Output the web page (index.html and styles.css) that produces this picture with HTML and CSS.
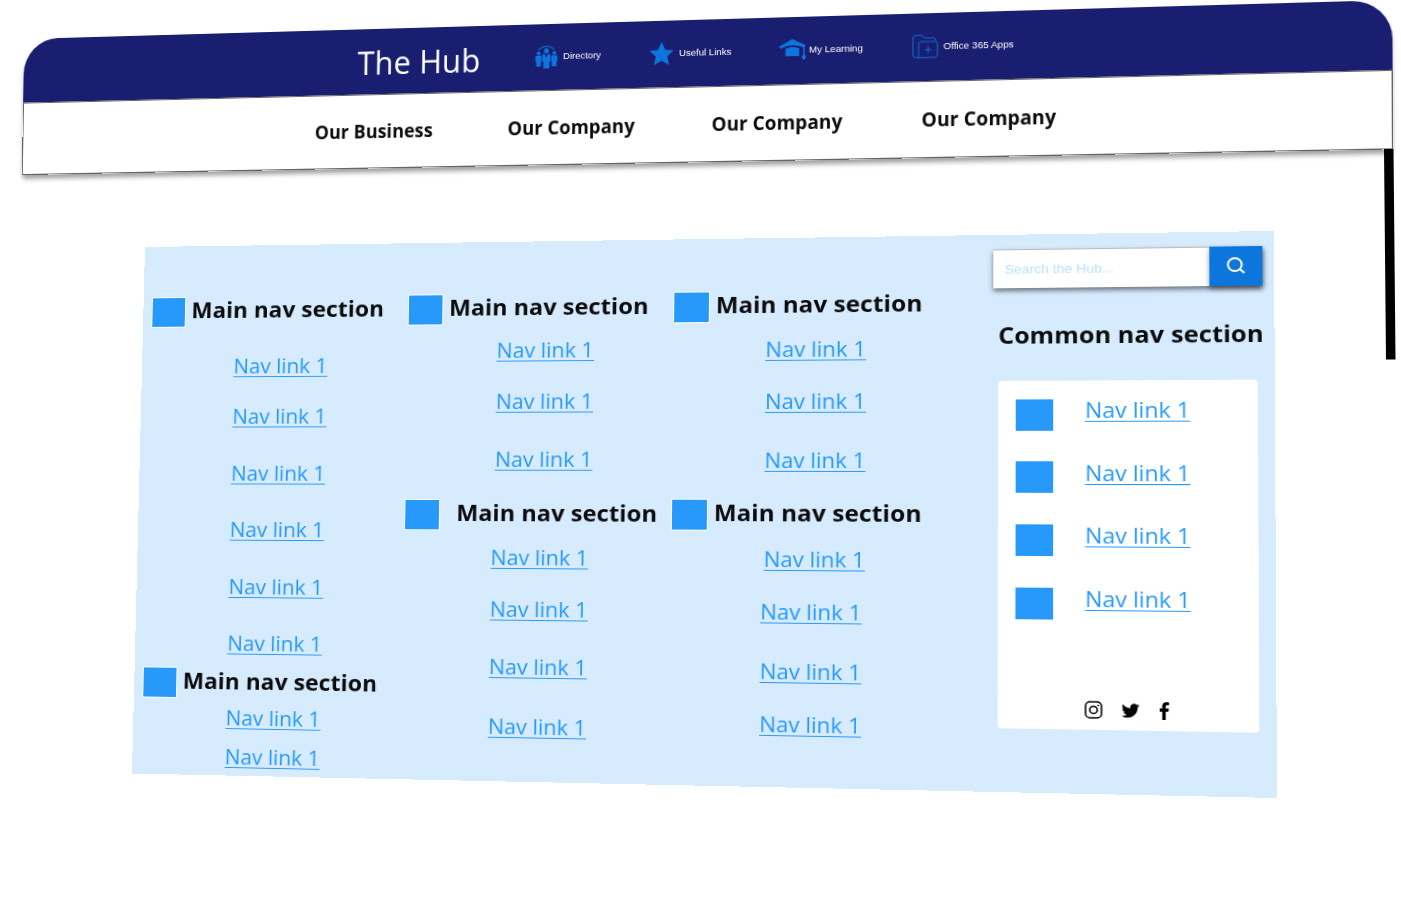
FILE: index.html
```html
<!DOCTYPE html>
<html lang="en">
<head>
<meta charset="utf-8">
<title>The Hub</title>
<link rel="stylesheet" href="styles.css">
</head>
<body>
<div class="scene">
  <header class="header">
    <div class="topbar">
      <h1 class="brand">The Hub</h1>
      <a class="tool tool-directory">
        <svg class="icon-directory" width="24" height="24" viewBox="0 0 24 24" fill="#0d76dc"><path d="M4 5.2C8 .2 16 .2 20 5.2" fill="none" stroke="#0d76dc" stroke-width="1.1"/><circle cx="4" cy="8.4" r="2"/><circle cx="20" cy="8.4" r="2"/><circle cx="12" cy="6.2" r="2.6"/><path d="M.8 11h6.4v6H6.4v5H1.6v-5H.8zM16.8 11h6.4v6h-.8v5h-4.8v-5h-.8zM8 9.6h2.4L12 13l1.600-3.400H16v7.600h-1V24H9v-6.800H8z"/></svg>
        <span>Directory</span>
      </a>
      <a class="tool tool-links">
        <svg class="icon-star" width="25" height="24" viewBox="0 0 24 24" fill="#0d76dc"><path d="M12 0l3.600 8.200 8.400.9-6.300 5.800 1.900 8.600L12 19.200l-7.600 4.300 1.900-8.600L0 9.100l8.400-.9z"/></svg>
        <span>Useful Links</span>
      </a>
      <a class="tool tool-learning">
        <svg class="icon-cap" width="27" height="22" viewBox="0 0 27 22" fill="#0d76dc"><path d="M0 7.500L13.500 0 27 6.500l-1.300 1.200v7.800l1.500 2.700-2.200 3.300-2.200-3.300 1.500-2.700V8.600C18 5.200 8.500 5.400 2.500 9.300z"/><path d="M6.800 9.500c4-2 9.500-2 13.600 0V17H6.800z"/></svg>
        <span>My Learning</span>
      </a>
      <a class="tool tool-apps">
        <svg class="icon-folder" width="25" height="24" viewBox="0 0 25 24" fill="none" stroke="#0d76dc" stroke-width=".9"><path d="M6 22.800H3.500Q.6 22.500.6 19.500V3Q.8.8 3 .7h6l3.200 2.800h8q2.600.3 2.700 3"/><path d="M6 22.800V9.200Q6 7 8.300 7h13.500q2.400.2 2.400 2.500v10.800q-.2 2.300-2.600 2.500z"/><path d="M15.200 11.700v6.600M11.900 15h6.600"/></svg>
        <span>Office 365 Apps</span>
      </a>
    </div>
    <nav class="mainnav">
      <a>Our Business</a><a>Our Company</a><a>Our Company</a><a>Our Company</a>
    </nav>
  </header>

  <div class="scrollbar"></div>

  <main class="panel">
    <section class="column column-first">
      <h2 class="heading"><i class="box"></i>Main nav section</h2>
      <a class="link">Nav link 1</a>
      <a class="link">Nav link 1</a>
      <a class="link">Nav link 1</a>
      <a class="link">Nav link 1</a>
      <a class="link">Nav link 1</a>
      <a class="link">Nav link 1</a>
      <h2 class="heading"><i class="box"></i>Main nav section</h2>
      <a class="link">Nav link 1</a>
      <a class="link">Nav link 1</a>
    </section>
    <section class="column column-second">
      <h2 class="heading"><i class="box"></i>Main nav section</h2>
      <a class="link">Nav link 1</a>
      <a class="link">Nav link 1</a>
      <a class="link">Nav link 1</a>
      <h2 class="heading heading-wide"><i class="box"></i>Main nav section</h2>
      <a class="link link-near">Nav link 1</a>
      <a class="link link-near">Nav link 1</a>
      <a class="link link-near">Nav link 1</a>
      <a class="link link-near">Nav link 1</a>
    </section>
    <section class="column column-third">
      <h2 class="heading"><i class="box"></i>Main nav section</h2>
      <a class="link">Nav link 1</a>
      <a class="link">Nav link 1</a>
      <a class="link">Nav link 1</a>
      <h2 class="heading"><i class="box"></i>Main nav section</h2>
      <a class="link">Nav link 1</a>
      <a class="link link-near">Nav link 1</a>
      <a class="link link-near">Nav link 1</a>
      <a class="link link-near">Nav link 1</a>
    </section>
    <aside class="rail">
      <div class="search">
        <span class="search-field">Search the Hub...</span>
        <span class="search-button"><svg width="18" height="17" viewBox="0 0 18 17" fill="none" stroke="#fff" stroke-width="1.900"><circle cx="8" cy="7.500" r="6.500"/><path d="M12.600 12L17 16"/></svg></span>
      </div>
      <h2 class="rail-title">Common nav section</h2>
      <div class="card">
        <div class="card-row"><i class="box box-plain"></i><a class="link">Nav link 1</a></div>
        <div class="card-row"><i class="box box-plain"></i><a class="link">Nav link 1</a></div>
        <div class="card-row"><i class="box box-plain"></i><a class="link">Nav link 1</a></div>
        <div class="card-row"><i class="box box-plain"></i><a class="link">Nav link 1</a></div>
        <div class="social">
          <svg width="17" height="18" viewBox="0 0 17 18" fill="none" stroke="#000" stroke-width="1.500"><rect x=".9" y=".9" width="15.200" height="16.200" rx="4.300"/><circle cx="8.500" cy="9" r="3.600"/><circle cx="13" cy="4.500" r=".5" fill="#000" stroke-width=".8"/></svg>
          <svg class="twitter" width="17" height="15" viewBox="0 0 24 20" fill="#000"><path d="M24 2.400c-.9.400-1.800.7-2.800.8 1-.6 1.800-1.600 2.200-2.700-1 .6-2 1-3.100 1.200A4.900 4.900 0 0 0 11.900 6.200C7.800 6 4.200 4 1.700.9c-1.300 2.300-.7 5.200 1.500 6.600-.8 0-1.600-.2-2.200-.6 0 2.300 1.600 4.400 3.900 4.900-.7.200-1.500.2-2.200.1.600 2 2.400 3.400 4.600 3.400A9.900 9.900 0 0 1 0 17.300 13.900 13.900 0 0 0 7.500 19.500c9.100 0 14.300-7.700 14-14.600 1-.7 1.800-1.600 2.500-2.500z"/></svg>
          <svg class="facebook" width="9" height="18" viewBox="0 0 9 18" fill="#000"><path d="M2.400 18V9.700H0V6.600h2.400V4.300C2.400 1.600 3.900.2 6.300.2c1.100 0 2.100.1 2.500.2v2.900H7.200C5.900 3.300 5.600 3.900 5.600 4.800v1.800h3l-.4 3.100H5.600V18z"/></svg>
        </div>
      </div>
    </aside>
  </main>
</div>
</body>
</html>
```
FILE: styles.css
```css
* { box-sizing: border-box; }
body { margin: 0; background: #fff; overflow: hidden; }
h1, h2 { margin: 0; }
svg { display: block; flex: none; overflow: visible; }

.scene {
  display: grid;
  grid-template: 916px / 1401px;
  place-items: start;
  overflow: hidden;
  font-family: "Open Sans", "Noto Sans", sans-serif;
}
.header, .panel, .scrollbar { grid-area: 1 / 1; transform-origin: 0 0; }

/* Header plane, seen in perspective */
.header {
  width: 1368px;
  height: 143px;
  display: flex;
  flex-direction: column;
  border-radius: 37px 37px 0 0;
  box-shadow: 0 5px 5px -1px rgba(0, 0, 0, .38);
  transform: matrix3d(.908933, -.028509, 0, -.00006541, -.017832, .948252, 0, -.000016, 0, 0, 1, 0, 24.3, 39, 0, 1);
}
.topbar {
  flex: none;
  height: 67px;
  display: flex;
  align-items: center;
  background: #191e70;
  border-radius: 37px 37px 0 0;
  padding: 0 0 2px 358px;
}
.brand {
  width: 183px;
  padding-top: 4px;
  font-size: 32px;
  font-weight: 400;
  line-height: 44px;
  letter-spacing: .15px;
  color: #fff;
  white-space: nowrap;
}
.tool {
  display: flex;
  align-items: center;
  gap: 5px;
  font: 9.600px/14px "Liberation Sans", Arial, sans-serif;
  color: #fff;
  white-space: nowrap;
}
.tool-directory { width: 116px; }
.tool-links { width: 129px; }
.tool-learning { width: 131px; gap: 3px; }
.mainnav {
  flex: 1;
  display: grid;
  grid-template-columns: 200px 206px 206px 1fr;
  align-items: center;
  padding: 0 0 2px 313px;
  background: #fff;
  border: 1px solid #666;
  font-size: 18.700px;
  font-weight: 700;
  letter-spacing: .07px;
  color: #0b0b0b;
  white-space: nowrap;
}

.scrollbar {
  width: 12px;
  height: 211px;
  margin: 149px 0 0 1384px;
  background: #000;
  clip-path: polygon(0 0, 9.500px 0, 11.500px 210.500px, 2px 210.500px);
}

/* Content plane, seen in perspective */
.panel {
  width: 1140px;
  height: 566px;
  display: grid;
  grid-template-columns: 273px 273px 317px 252px;
  padding-left: 9px;
  background: #d7ebff;
  transform: matrix3d(.911193, -.028386, 0, -.00006213, -.026184, .911367, 0, -.00002436, 0, 0, 1, 0, 145, 247, 0, 1);
}
.column { display: grid; align-items: start; align-content: start; padding-top: 55px; }
.column-first { grid-template-rows: 58.500px 54px 61px 60.400px 60.800px 60.600px 41.700px 37px 40.600px 30px; }
.column-second { grid-template-rows: 44.300px 53.700px 60.900px 58.400px 44.300px 54.500px 60.300px 61.600px 30px; }
.column-third { grid-template-rows: 44.500px 54.800px 60.300px 56px 46.200px 54.700px 60.700px 53.900px 30px; }

.heading {
  display: flex;
  align-items: flex-start;
  gap: 6px;
  height: 33px;
  font-size: 24px;
  line-height: 28px;
  letter-spacing: .1px;
  color: #0b0b0b;
  white-space: nowrap;
}
.heading-wide { gap: 17px; }
.box { flex: none; width: 37px; height: 33px; background: #2699fb; border: 1px solid #fff; }
.box-plain { width: 36px; height: 32px; border: 0; }

.link {
  font-size: 22px;
  line-height: 30px;
  color: #2699fb;
  text-decoration: underline;
  text-decoration-thickness: 1px;
  text-underline-offset: 3px;
  text-decoration-skip-ink: none;
  white-space: nowrap;
}
.column .link { justify-self: start; margin-left: 89.500px; }
.column-second .link { margin-left: 93px; }
.column-third .link { margin-left: 93px; }
.column .link-near { margin-left: 90px; }

.rail { padding-top: 14.500px; }
.search {
  display: flex;
  width: 257px;
  height: 40px;
  box-shadow: 0 3px 5px rgba(0, 0, 0, .5);
}
.search-field {
  flex: 1;
  padding-left: 11px;
  background: #fff;
  border-top: 1px solid #bbb;
  font: 13.500px/40px "Liberation Sans", Arial, sans-serif;
  color: #bce0fd;
}
.search-button {
  width: 50px;
  display: grid;
  place-items: center;
  background: #0d76dc;
  box-shadow: 0 3px 5px rgba(0, 0, 0, .4);
}
.rail-title {
  margin: 32px 0 0 5px;
  font-size: 24px;
  line-height: 32px;
  letter-spacing: .1px;
  color: #0b0b0b;
  white-space: nowrap;
}
.card {
  width: 247px;
  height: 352px;
  margin: 31px 0 0 5px;
  padding: 15px 0 0 17px;
  background: #fff;
  border-radius: 4px;
}
.card-row {
  display: flex;
  align-items: flex-start;
  gap: 30.500px;
  height: 63.700px;
  padding-top: 4px;
}
.card-row .link { margin-top: -4.500px; }
.social { display: flex; align-items: center; margin: 54px 0 0 66px; }
.twitter { margin-left: 18px; }
.facebook { margin-left: 19px; }
```
